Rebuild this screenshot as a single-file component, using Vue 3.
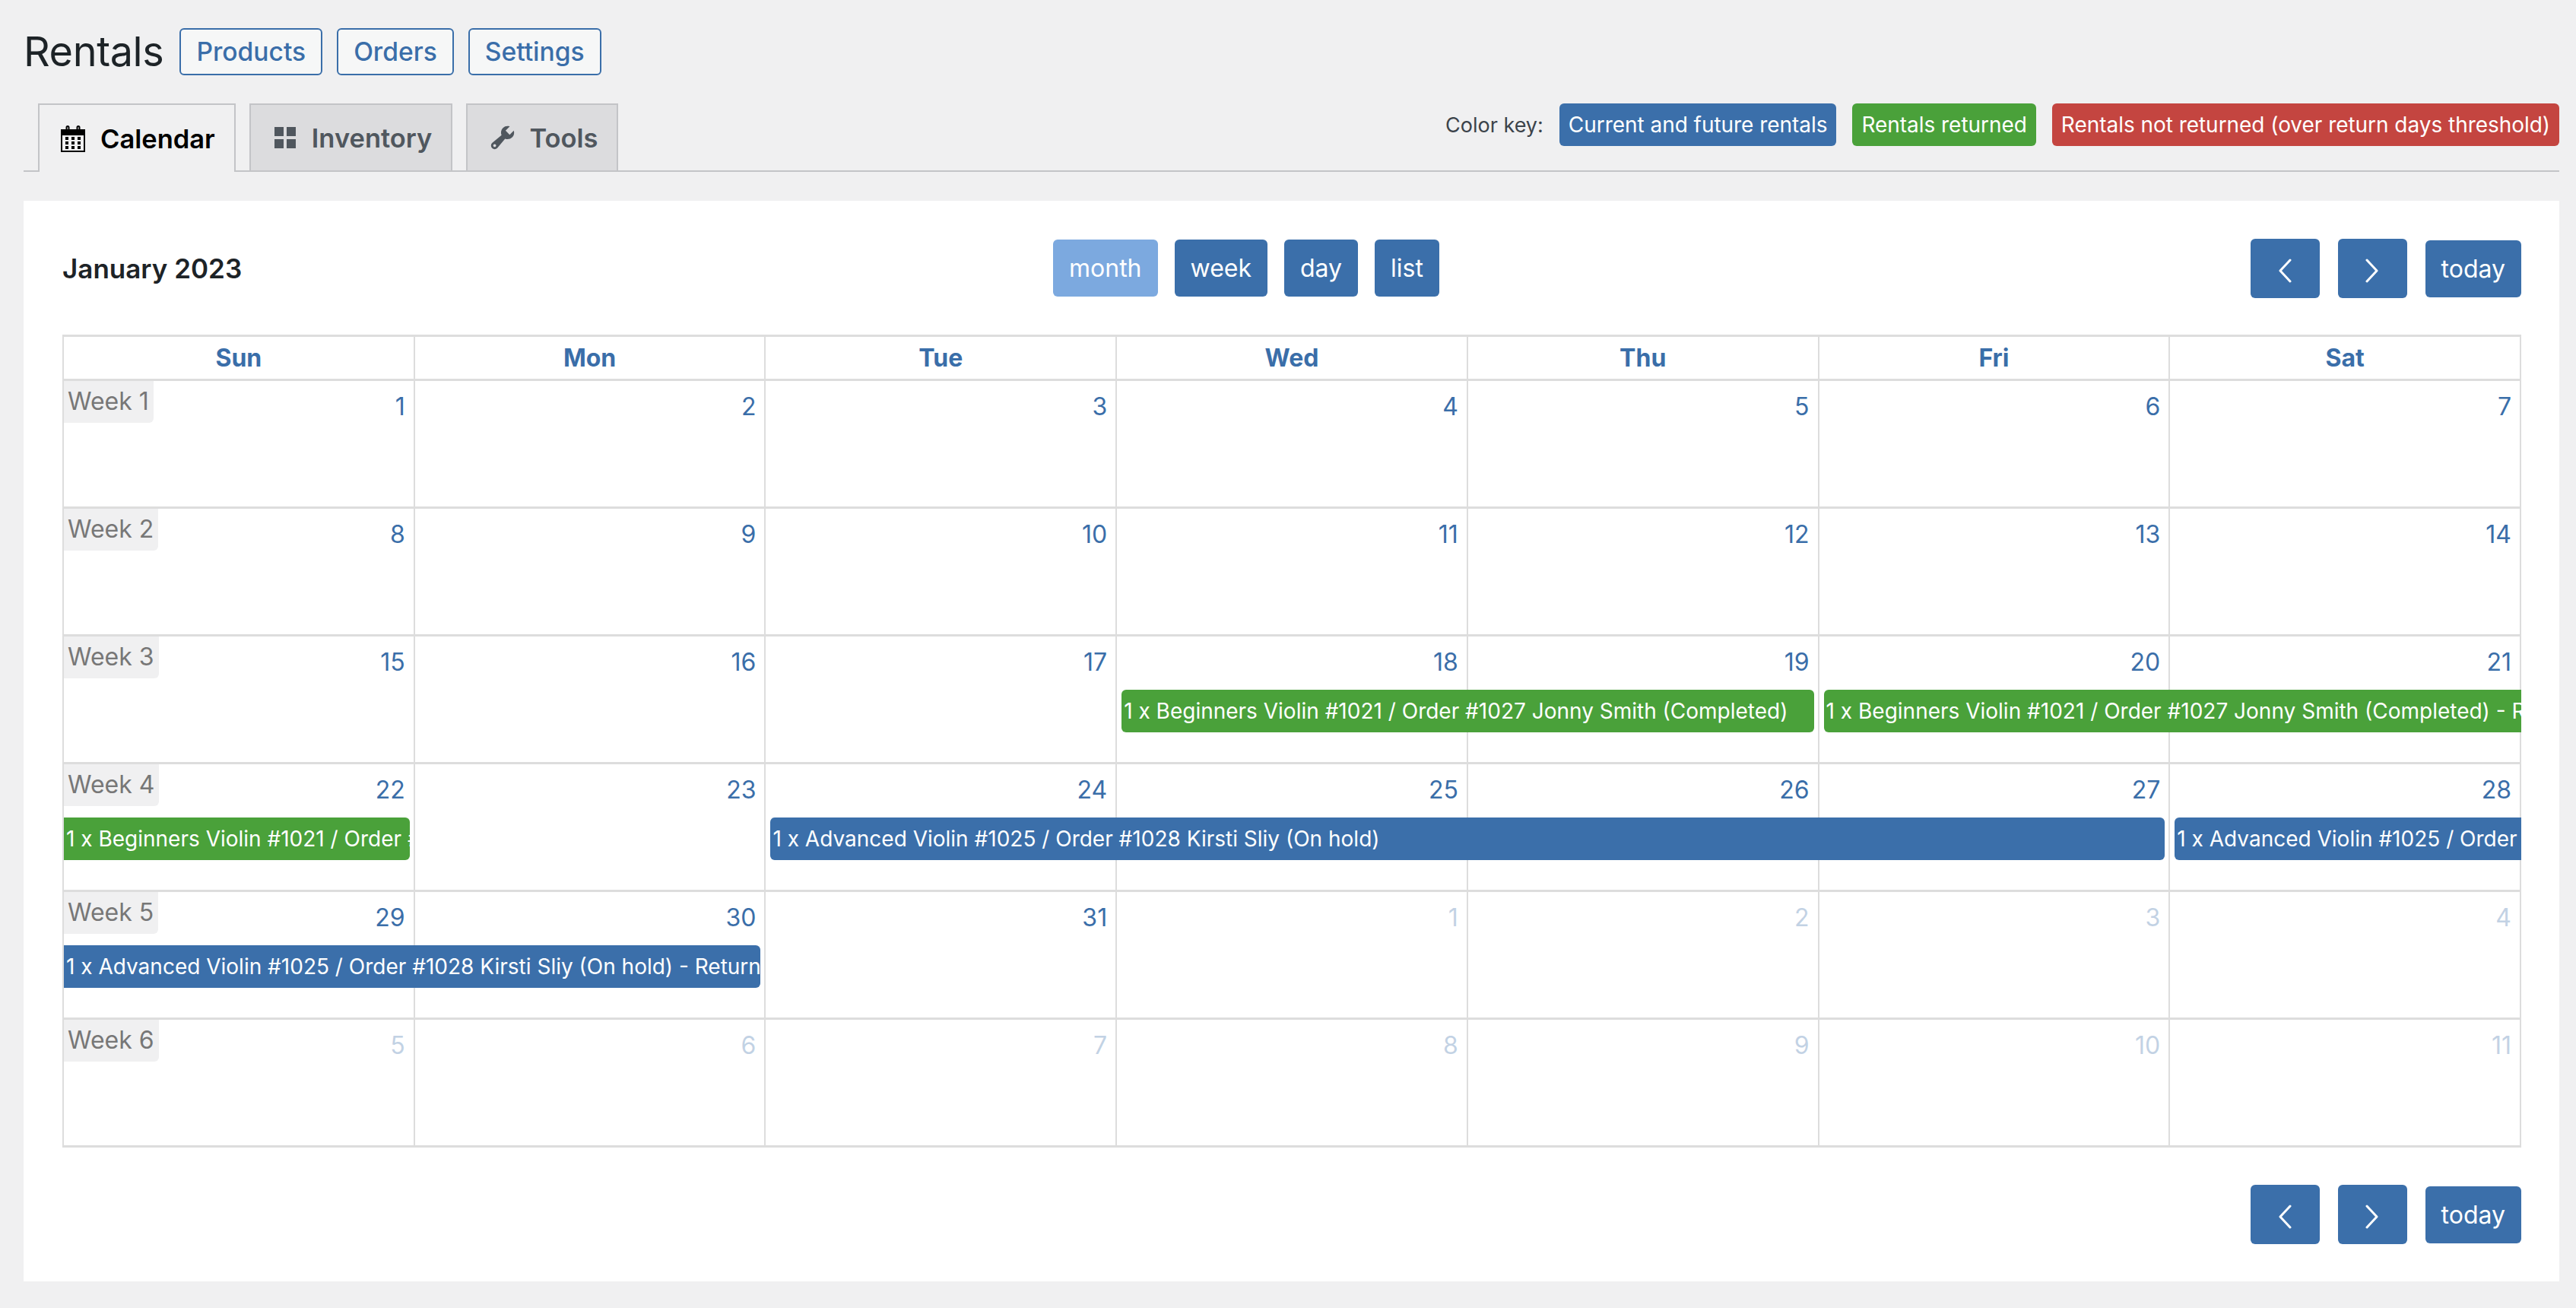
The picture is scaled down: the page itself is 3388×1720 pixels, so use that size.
<script setup>
const days = [
  [1,2,3,4,5,6,7],[8,9,10,11,12,13,14],[15,16,17,18,19,20,21],[22,23,24,25,26,27,28],
  [29,30,31,{d:1},{d:2},{d:3},{d:4}],[{d:5},{d:6},{d:7},{d:8},{d:9},{d:10},{d:11}]
]
const heads = ['Sun','Mon','Tue','Wed','Thu','Fri','Sat']
const bv = '1 x Beginners Violin #1021 / Order #1027 Jonny Smith (Completed)'
const av = '1 x Advanced Violin #1025 / Order #1028 Kirsti Sliy (On hold)'
const events = {
  2: [
    { text: bv, col: 4, span: 2, color: 'green', start: true, end: true },
    { text: bv + ' - Return', col: 6, span: 2, color: 'green', start: true, end: false }
  ],
  3: [
    { text: bv + ' - Return', col: 1, span: 1, color: 'green', start: false, end: true },
    { text: av, col: 3, span: 4, color: 'blue', start: true, end: true },
    { text: av + ' - Return', col: 7, span: 1, color: 'blue', start: true, end: false }
  ],
  4: [
    { text: av + ' - Return', col: 1, span: 2, color: 'blue', start: false, end: true }
  ]
}
</script>

<template>
  <div class="page">
    <div class="title-row">
      <h1 class="title">Rentals</h1>
      <a class="action">Products</a>
      <a class="action">Orders</a>
      <a class="action">Settings</a>
    </div>

    <div class="tab-bar">
      <div class="tabs">
        <a class="tab active">
          <svg class="ico" viewBox="0 0 32 35" fill="#000">
            <path fill-rule="evenodd" d="M0 5h32v30H0zM2 13v20h28V13z"/>
            <path d="M7.500 7V2.500a1.500 1.500 0 0 1 3 0V7M21.500 7V2.500a1.500 1.500 0 0 1 3 0V7" fill="none" stroke="#000" stroke-width="2"/>
            <rect x="6" y="15" width="4" height="4"/><rect x="14" y="15" width="4" height="4"/><rect x="22" y="15" width="4" height="4"/>
            <rect x="6" y="21" width="4" height="4"/><rect x="14" y="21" width="4" height="4"/><rect x="22" y="21" width="4" height="4"/>
            <rect x="6" y="27" width="4" height="4"/><rect x="14" y="27" width="4" height="4"/><rect x="22" y="27" width="4" height="4"/>
          </svg>
          Calendar
        </a>
        <a class="tab grid-tab">
          <svg class="ico" viewBox="0 0 28 28" fill="#50575e">
            <rect width="12" height="12"/><rect x="16" width="12" height="12"/>
            <rect y="16" width="12" height="12"/><rect x="16" y="16" width="12" height="12"/>
          </svg>
          Inventory
        </a>
        <a class="tab tools-tab">
          <svg class="ico" viewBox="0 0 20 20" fill="#50575e">
            <path d="M16.68 9.77c-1.34 1.34-3.3 1.67-4.95.99l-5.41 6.52c-.99.99-2.59.99-3.58 0s-.99-2.59 0-3.58l6.52-5.42c-.68-1.65-.35-3.61.99-4.95 1.28-1.28 3.12-1.62 4.72-1.06l-2.89 2.89 2.82 2.82 2.86-2.87c.53 1.58.18 3.39-1.08 4.66zM3.810 16.21c.4.39 1.04.39 1.43 0 .4-.4.4-1.04 0-1.43-.39-.4-1.03-.4-1.43 0-.39.39-.39 1.03 0 1.43z"/>
          </svg>
          Tools
        </a>
      </div>
      <div class="key">
        <span class="key-label">Color key:</span>
        <span class="badge blue">Current and future rentals</span>
        <span class="badge green">Rentals returned</span>
        <span class="badge red">Rentals not returned (over return days threshold)</span>
      </div>
    </div>

    <div class="card">
      <div class="toolbar">
        <div class="cal-title">January 2023</div>
        <div class="views">
          <button class="btn on">month</button>
          <button class="btn">week</button>
          <button class="btn">day</button>
          <button class="btn">list</button>
        </div>
        <div class="nav">
          <button class="btn arrow">
            <svg viewBox="0 0 18 32" width="18" height="32"><path d="M16 2 3 16l13 14" fill="none" stroke="#fff" stroke-width="3" stroke-linecap="round" stroke-linejoin="round"/></svg>
          </button>
          <button class="btn arrow">
            <svg viewBox="0 0 18 32" width="18" height="32"><path d="M2 2l13 14L2 30" fill="none" stroke="#fff" stroke-width="3" stroke-linecap="round" stroke-linejoin="round"/></svg>
          </button>
          <button class="btn">today</button>
        </div>
      </div>

      <div class="cal">
        <div class="head">
          <div v-for="h in heads" :key="h" class="head-cell">{{ h }}</div>
        </div>
        <div v-for="(week, w) in days" :key="w" class="week">
          <div v-for="(day, i) in week" :key="i" class="cell" :style="{ gridColumn: i + 1 }">
            <span v-if="i === 0" class="week-no">Week {{ w + 1 }}</span>
            <span class="num" :class="{ other: typeof day === 'object' }">{{ typeof day === 'object' ? day.d : day }}</span>
          </div>
          <div
            v-for="(e, k) in (events[w] || [])"
            :key="k"
            class="event"
            :class="[e.color, { start: e.start, end: e.end }]"
            :style="{ gridColumn: e.col + ' / span ' + e.span }"
          >{{ e.text }}</div>
        </div>
      </div>

      <div class="footer">
        <div class="nav">
          <button class="btn arrow">
            <svg viewBox="0 0 18 32" width="18" height="32"><path d="M16 2 3 16l13 14" fill="none" stroke="#fff" stroke-width="3" stroke-linecap="round" stroke-linejoin="round"/></svg>
          </button>
          <button class="btn arrow">
            <svg viewBox="0 0 18 32" width="18" height="32"><path d="M2 2l13 14L2 30" fill="none" stroke="#fff" stroke-width="3" stroke-linecap="round" stroke-linejoin="round"/></svg>
          </button>
          <button class="btn">today</button>
        </div>
      </div>
    </div>
  </div>
</template>

<style>
html, body { margin: 0; background: #f0f0f1; }
</style>

<style scoped>
.page {
  box-sizing: border-box;
  width: 3388px;
  height: 1720px;
  padding: 37px 22px 0 31px;
  background: #f0f0f1;
  font-family: Inter, "Liberation Sans", sans-serif;
  color: #1d2327;
  overflow: hidden;
}
.title-row { display: flex; align-items: center; height: 62px; }
.title { margin: 0 21px 0 0; font-size: 54px; font-weight: 400; line-height: 62px; color: #1d2327; letter-spacing: -0.4px; }
.action {
  box-sizing: border-box;
  height: 62px;
  margin-right: 19px;
  padding: 0 20px;
  border: 2px solid #3a6ea9;
  border-radius: 6px;
  background: #f6f7f7;
  color: #3a6ea9;
  font-size: 33.6px;
  font-weight: 500;
  line-height: 58px;
}
.tab-bar {
  display: flex;
  justify-content: space-between;
  margin-top: 37px;
  height: 90px;
  box-sizing: border-box;
  border-bottom: 2px solid #c3c4c7;
}
.tabs { display: flex; gap: 18px; padding-left: 19px; height: 90px; }
.tab {
  box-sizing: border-box;
  display: flex;
  align-items: center;
  gap: 20px;
  height: 88px;
  padding: 0 25px 0 28px;
  border: 2px solid #c3c4c7;
  border-bottom: 0;
  background: #dcdcde;
  color: #50575e;
  font-size: 34.5px;
  font-weight: 600;
}
.tab.active { height: 90px; background: #f0f0f1; color: #000; }
.ico { width: 28px; height: 28px; flex: none; }
.active .ico { width: 32px; height: 35px; }
.grid-tab { padding-left: 31px; gap: 21px; }
.tools-tab .ico { width: 38px; height: 38px; }
.tools-tab { padding-left: 27px; gap: 16px; }
.key { display: flex; align-items: center; height: 56px; gap: 21px; font-size: 27px; }
.key-label { color: #3c434a; }
.badge {
  height: 56px;
  line-height: 56px;
  padding: 0 12px;
  border-radius: 6px;
  color: #fff;
  font-size: 28px;
  letter-spacing: -0.04px;
  white-space: nowrap;
}
.blue { background: #3b6faa; }
.green { background: #4aa13a; }
.red { background: #c44540; }
.card {
  box-sizing: border-box;
  height: 1421px;
  margin-top: 38px;
  padding: 50px 50px 0 51px;
  background: #fff;
}
.toolbar { display: flex; justify-content: space-between; align-items: center; height: 78px; position: relative; }
.cal-title { font-size: 35px; font-weight: 600; color: #1d2327; }
.views { position: absolute; left: 1303px; top: 1px; display: flex; gap: 22px; }
.nav { display: flex; align-items: center; gap: 24px; }
.btn {
  box-sizing: border-box;
  height: 75px;
  padding: 0 21px;
  border: 0;
  border-radius: 6px;
  background: #3b6faa;
  color: #fff;
  font: 400 32px Inter, "Liberation Sans", sans-serif;
}
.btn.on { background: #7ca9df; }
.arrow {
  width: 91px;
  height: 78px;
  padding: 0;
  display: flex;
  align-items: center;
  justify-content: center;
}
.arrow svg { margin-top: 5px; }
.cal { margin-top: 48px; border-left: 2px solid #ddd; border-bottom: 3px solid #ddd; }
.head { display: grid; grid-template-columns: repeat(7, 1fr); height: 58px; box-sizing: border-box; border-top: 3px solid #ddd; }
.head-cell {
  border-right: 2px solid #ddd;
  text-align: center;
  color: #3a6ea9;
  font-size: 32px;
  font-weight: 700;
  line-height: 55px;
}
.week {
  display: grid;
  grid-template-columns: repeat(7, 1fr);
  grid-template-rows: 70px 56px 1fr;
  height: 168px;
  box-sizing: border-box;
  border-top: 3px solid #ddd;
  overflow: hidden;
}
.cell {
  grid-row: 1 / 4;
  min-width: 0;
  display: flex;
  align-items: flex-start;
  justify-content: space-between;
  border-right: 2px solid #ddd;
}
.week-no {
  box-sizing: border-box;
  height: 55px;
  padding: 0 6px 0 5px;
  border-radius: 0 0 6px 0;
  background: #f0f0f1;
  color: #777;
  font-size: 32px;
  line-height: 54px;
}
.num {
  margin-left: auto;
  padding: 12px 11px 0 0;
  color: #3a6ea9;
  font-size: 32px;
  line-height: 44px;
}
.num.other { opacity: 0.3; }
.event {
  grid-row: 2;
  z-index: 1;
  min-width: 0;
  height: 56px;
  padding: 0 3px;
  overflow: hidden;
  color: #fff;
  font-size: 28px;
  line-height: 56px;
  white-space: nowrap;
}
.event.start { margin-left: 6px; border-top-left-radius: 6px; border-bottom-left-radius: 6px; }
.event.end { margin-right: 7px; border-top-right-radius: 6px; border-bottom-right-radius: 6px; }
.footer { display: flex; justify-content: flex-end; margin-top: 49px; }
</style>
